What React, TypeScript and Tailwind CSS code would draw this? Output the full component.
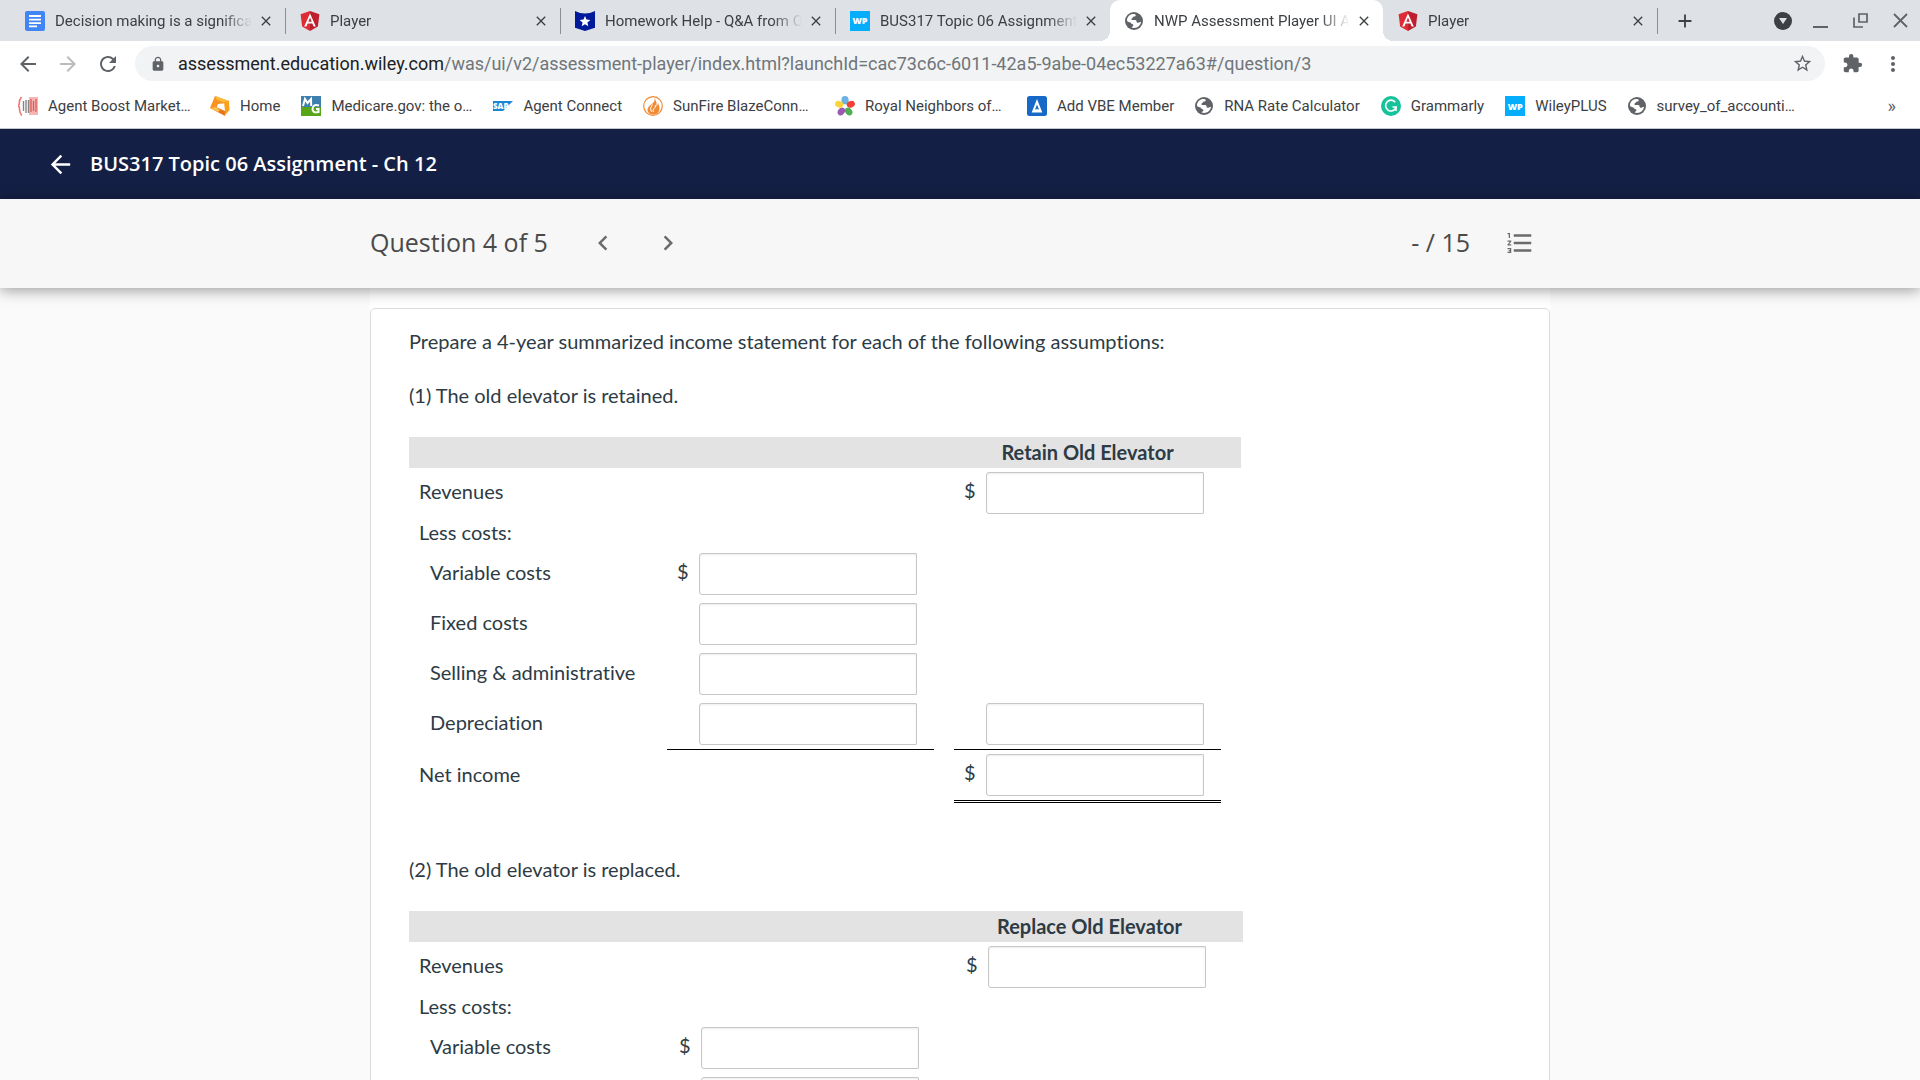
import type { ReactNode } from "react";
import {
  MdAdd,
  MdArrowBack,
  MdArrowForward,
  MdChevronLeft,
  MdChevronRight,
  MdClose,
  MdExtension,
  MdFormatListNumbered,
  MdLock,
  MdMoreVert,
  MdRefresh,
  MdStarBorder,
} from "react-icons/md";

/* ---------- site icons ---------- */

function DocsIcon() {
  return (
    <svg viewBox="0 0 20 20" className="size-5 shrink-0" aria-hidden="true">
      <rect width="20" height="20" rx="2" fill="#4285f4" />
      <path d="M4 5h12M4 8.6h12M4 12.1h12M4 15.4h8" stroke="#fff" strokeWidth="1.8" />
    </svg>
  );
}

function AngularIcon() {
  return (
    <svg viewBox="0 0 20 20" className="size-5 shrink-0" aria-hidden="true">
      <path d="M10 0 .6 3.3l1.5 12.3L10 20z" fill="#dd2c35" />
      <path d="m10 0 9.4 3.3-1.5 12.3L10 20z" fill="#bd1f2d" />
      <path d="m10 2.4-5.8 13h2.2l1.2-2.9h4.8l1.2 2.9h2.2zm0 4.1 1.7 4.2H8.3z" fill="#fff" fillRule="evenodd" />
    </svg>
  );
}

function StarShieldIcon() {
  return (
    <svg viewBox="0 0 20 20" className="size-5 shrink-0" aria-hidden="true">
      <path d="M0 0q10 5 20 0v16.8L10 20 0 16.8z" fill="#001a9b" />
      <path d="m10 5 1.5 3.6 3.9.3-3 2.5.9 3.8-3.3-2-3.3 2 .9-3.8-3-2.5 3.9-.3z" fill="#fff" />
    </svg>
  );
}

function WpIcon() {
  return (
    <span className="flex size-5 shrink-0 items-center justify-center bg-[#05aefc] font-['Open_Sans',sans-serif] text-[9px] leading-none font-extrabold text-white">
      WP
    </span>
  );
}

function GlobeIcon() {
  return (
    <svg viewBox="0 0 18 18" className="mr-px size-[18px] shrink-0" aria-hidden="true">
      <circle cx="9" cy="9" r="9" fill="#5f6368" />
      <path
        d="M1.9 8.3C2.2 5 4.6 2.5 7.600 2c1.500-.2 2.900.1 3.100.9.2.9-.3 1.500-1.600 1.600-1.300.1-1.300 1.700-2.300 2-.9.3-.4 1.300.5 1.400h3c1 0 1.200.9 1.300 1.800.1.900.8 1.200 1.600 1.100 1.100-.1 1.900-.8 2.900-1-.6 3.600-3.400 6.200-7 6.200-.9 0-1.700-.1-2.500-.4.2-.9 1.800-1 1.800-2.300 0-1.100-.9-1.500-2-1.600-.3-1.500-1.500-1.600-2.700-1.800-1-.2-1.800-.7-1.800-1.600z"
        fill="#fff"
      />
    </svg>
  );
}

function AgentBoostIcon() {
  return (
    <svg viewBox="0 0 20 20" className="size-5 shrink-0" aria-hidden="true">
      <path d="M11 1h9v18h-9z" fill="#f6b5b3" />
      <path d="M3.500 1Q1 4 1.300 8L.4 10l1 1.500Q1.200 16 3.700 19.500" fill="none" stroke="#ee7674" strokeWidth="1.600" />
      <path d="M5.500 5v10M8 4v13M10.500 4v13" stroke="#858585" strokeWidth="1.400" />
      <path d="M13 3v13M15.500 5v10M18 3v13" stroke="#df5a58" strokeWidth="1.300" />
    </svg>
  );
}

function HomeTagIcon() {
  return (
    <svg viewBox="0 0 20 20" className="size-5 shrink-0" aria-hidden="true">
      <path d="m5 0 14 5-2 2-9 1-2 5-6-1z" fill="#f7931e" />
      <path d="m5 0 14 5-4 2-8-3z" fill="#fdbb3c" />
      <path d="m0 12 6-1 9 4v5z" fill="#e8741c" />
      <path d="m14 6 5-1 .5 9-5 6 .5-5z" fill="#f9a11b" />
      <path d="m0 12 6-1 4 3-2 2z" fill="#fcc04a" />
    </svg>
  );
}

function MedicareIcon() {
  return (
    <svg viewBox="0 0 20 20" className="size-5 shrink-0" aria-hidden="true">
      <rect width="20" height="11" fill="#3f7fae" />
      <rect y="11" width="20" height="9" fill="#58a618" />
      <path d="m2 10 2-7 2.500 4L10 3l.2 7" fill="none" stroke="#fff" strokeWidth="2" />
      <path d="M18 9.500q-6-2-6.500 3.500 0 4.500 6 3v-3h-2.500" fill="none" stroke="#fff" strokeWidth="2" />
    </svg>
  );
}

function SapIcon() {
  return (
    <span className="flex size-5 shrink-0 items-center" aria-hidden="true">
      <svg viewBox="0 0 20 10" className="h-2.5 w-5">
        <path d="M0 0h20L10 10H0z" fill="#1a86d8" />
        <text x="0" y="8" fontSize="8" fontWeight="800" fontFamily="Open Sans, sans-serif" fill="#fff">
          SAP
        </text>
      </svg>
    </span>
  );
}

function FlameIcon() {
  return (
    <svg viewBox="0 0 20 20" className="size-5 shrink-0" aria-hidden="true">
      <circle cx="10" cy="10" r="9.300" fill="#fff" stroke="#f08a35" strokeWidth="1.200" />
      <path d="M11 1.500q2 3-2 6.500-5 3-4.500 6.500 1 4 5.500 4 6 0 6.500-5.500.2-3-1.500-6-.3 2.500-1.500 3.500Q14 5 11 1.500z" fill="#f08a35" />
      <path d="M9.500 8.500q-3.500 4-1 7.500M12.500 9q.5 2.500-2 4-1 1.500 0 3" fill="none" stroke="#fff" strokeWidth="1" />
    </svg>
  );
}

function FlowerIcon() {
  return (
    <svg viewBox="0 0 20 20" className="size-5 shrink-0" aria-hidden="true">
      <ellipse cx="10" cy="4.200" rx="3.600" ry="4.200" fill="#6cb2e4" />
      <ellipse cx="15.800" cy="8.300" rx="4.200" ry="3.300" transform="rotate(-18 15.800 8.300)" fill="#ef4136" />
      <ellipse cx="13.700" cy="15.500" rx="3.300" ry="4.200" transform="rotate(-36 13.700 15.500)" fill="#4caf50" />
      <ellipse cx="6.300" cy="15.500" rx="3.300" ry="4.200" transform="rotate(36 6.300 15.500)" fill="#9b59b0" />
      <ellipse cx="4.200" cy="8.300" rx="4.200" ry="3.300" transform="rotate(18 4.200 8.300)" fill="#fbd43a" />
      <circle cx="10" cy="10.300" r="1.700" fill="#fff" />
    </svg>
  );
}

function VbeIcon() {
  return (
    <svg viewBox="0 0 20 20" className="size-5 shrink-0" aria-hidden="true">
      <rect width="20" height="20" rx="2.500" fill="#1769c7" />
      <path d="m10 3-5.300 13.500h10.600zm0 5.500 2 5.200L10 13l-2 .7z" fill="#fff" fillRule="evenodd" />
    </svg>
  );
}

function GrammarlyIcon() {
  return (
    <svg viewBox="0 0 20 20" className="size-5 shrink-0" aria-hidden="true">
      <circle cx="10" cy="10" r="10" fill="#15c39a" />
      <path d="M14.200 6.200A5.400 5.400 0 1 0 15.200 11h-3.700" fill="none" stroke="#fff" strokeWidth="1.700" />
      <path d="M15.800 10.500v4.500h-1.600v-3.500z" fill="#fff" />
    </svg>
  );
}

/* ---------- browser chrome ---------- */

type Tab = { title: string; icon: ReactNode; active?: boolean; divider?: boolean };

const tabs: Tab[] = [
  { title: "Decision making is a significant", icon: <DocsIcon />, divider: true },
  { title: "Player", icon: <AngularIcon />, divider: true },
  { title: "Homework Help - Q&A from Online", icon: <StarShieldIcon />, divider: true },
  { title: "BUS317 Topic 06 Assignment", icon: <WpIcon /> },
  { title: "NWP Assessment Player UI App", icon: <GlobeIcon />, active: true },
  { title: "Player", icon: <AngularIcon />, divider: true },
];

function TabStrip() {
  return (
    <div className="flex h-[41px] shrink-0 items-stretch bg-[#dee1e6] pl-2.5">
      <div role="tablist" className="flex min-w-0 items-stretch">
        {tabs.map((tab, i) => (
          <div
            key={i}
            role="tab"
            aria-selected={!!tab.active}
            className={
              tab.active
                ? "relative flex w-[273px] min-w-0 items-center rounded-t-[10px] bg-white pr-[11px] pl-[15px] before:absolute before:bottom-0 before:-left-2.5 before:size-2.5 before:bg-[radial-gradient(circle_at_0_0,transparent_10px,white_10px)] after:absolute after:-right-2.5 after:bottom-0 after:size-2.5 after:bg-[radial-gradient(circle_at_100%_0,transparent_10px,white_10px)]"
                : "relative flex w-[275px] min-w-0 items-center pr-[11px] pl-[15px] last:w-[274px]"
            }
          >
            {tab.icon}
            <span className="ml-2.5 flex-1 overflow-hidden [mask-image:linear-gradient(to_right,black_calc(100%-30px),transparent)] text-[15px] leading-5 whitespace-nowrap">
              {tab.title}
            </span>
            <button type="button" aria-label={"Close " + tab.title} className="ml-1.5 shrink-0 text-[#3c4043]">
              <MdClose className="size-4" />
            </button>
            {tab.divider && <span className="absolute top-2 -right-px h-[26px] w-px bg-[#8a8d91]" />}
          </div>
        ))}
      </div>
      <button type="button" aria-label="New tab" className="ml-[17px] text-[#3c4043]">
        <MdAdd className="size-[22px]" />
      </button>
      <div className="ml-auto flex items-center pr-3 text-[#5f6368]">
        <button type="button" aria-label="Search tabs" className="mr-[21px]">
          <svg viewBox="0 0 18 18" className="size-[18px]">
            <circle cx="9" cy="9" r="9" fill="#3c4043" />
            <path d="M5 6h8l-4 6z" fill="#dee1e6" />
          </svg>
        </button>
        <button type="button" aria-label="Minimize" className="mr-[25px]">
          <svg viewBox="0 0 15 16" className="h-4 w-[15px]">
            <path d="M0 14h15" stroke="currentColor" strokeWidth="2" />
          </svg>
        </button>
        <button type="button" aria-label="Restore" className="mr-[25px]">
          <svg viewBox="0 0 15 15" className="size-[15px]" fill="none" stroke="currentColor" strokeWidth="1.700">
            <path d="M6 1h8v8H6zM1 4.500V14h9" />
          </svg>
        </button>
        <button type="button" aria-label="Close window">
          <svg viewBox="0 0 15 15" className="size-[15px]" stroke="currentColor" strokeWidth="1.800">
            <path d="m1 1 13 13M14 1 1 14" />
          </svg>
        </button>
      </div>
    </div>
  );
}

function Toolbar() {
  return (
    <div className="flex h-[45px] shrink-0 items-center pr-[15px] pl-4 text-[#5f6368]">
      <button type="button" aria-label="Back" className="mr-4">
        <MdArrowBack className="size-6" />
      </button>
      <button type="button" aria-label="Forward" className="mr-4 text-[#babcbe]">
        <MdArrowForward className="size-6" />
      </button>
      <button type="button" aria-label="Reload">
        <MdRefresh className="size-6" />
      </button>
      <div className="ml-[15px] flex h-[35px] min-w-0 flex-1 items-center rounded-full bg-[#f1f3f4] pr-3 pl-[15px]">
        <MdLock className="size-4 shrink-0" />
        <div
          role="textbox"
          aria-label="Address"
          tabIndex={0}
          className="ml-3 min-w-0 flex-1 overflow-hidden text-lg leading-6 whitespace-nowrap"
        >
          <span className="text-[#202124]">assessment.education.wiley.com</span>
          <span className="text-[#70757a]">
            /was/ui/v2/assessment-player/index.html?launchId=cac73c6c-6011-42a5-9abe-04ec53227a63#/question/3
          </span>
        </div>
        <button type="button" aria-label="Bookmark this page">
          <MdStarBorder className="size-[21px]" />
        </button>
      </div>
      <button type="button" aria-label="Extensions" className="ml-[17px]">
        <MdExtension className="size-[21px]" />
      </button>
      <button type="button" aria-label="Menu" className="ml-[18px]">
        <MdMoreVert className="size-6" />
      </button>
    </div>
  );
}

const bookmarks: { label: string; icon: ReactNode; cut?: boolean }[] = [
  { label: "Agent Boost Market…", icon: <AgentBoostIcon />, cut: true },
  { label: "Home", icon: <HomeTagIcon /> },
  { label: "Medicare.gov: the o…", icon: <MedicareIcon />, cut: true },
  { label: "Agent Connect", icon: <SapIcon /> },
  { label: "SunFire BlazeConn…", icon: <FlameIcon />, cut: true },
  { label: "Royal Neighbors of…", icon: <FlowerIcon />, cut: true },
  { label: "Add VBE Member", icon: <VbeIcon /> },
  { label: "RNA Rate Calculator", icon: <GlobeIcon /> },
  { label: "Grammarly", icon: <GrammarlyIcon /> },
  { label: "WileyPLUS", icon: <WpIcon /> },
  { label: "survey_of_accounti…", icon: <GlobeIcon />, cut: true },
];

function BookmarksBar() {
  return (
    <nav
      aria-label="Bookmarks"
      className="flex h-[43px] shrink-0 items-center gap-[21px] border-b border-[#c4c7cc] pr-6 pb-0.5 pl-[18px] text-[15px] leading-5"
    >
      {bookmarks.map((b) => (
        <a key={b.label} href="#" className="flex items-center gap-2.5 whitespace-nowrap">
          {b.icon}
          <span className={b.cut ? "w-[141px]" : ""}>{b.label}</span>
        </a>
      ))}
      <button type="button" aria-label="More bookmarks" className="ml-auto text-lg leading-5 text-[#5f6368]">
        »
      </button>
    </nav>
  );
}

/* ---------- assessment ---------- */

function AssignmentHeader() {
  return (
    <header className="flex h-[70px] shrink-0 items-center gap-[15px] bg-[#141f45] pl-[46px] font-['Open_Sans',sans-serif] text-white">
      <a href="#" aria-label="Back to assignments">
        <MdArrowBack className="size-[29px]" />
      </a>
      <h1 className="text-xl leading-7 font-semibold">BUS317 Topic 06 Assignment - Ch 12</h1>
    </header>
  );
}

function QuestionBar() {
  return (
    <div className="relative z-10 shrink-0 bg-[#f7f7f7] font-['Open_Sans',sans-serif] text-[#4a4a4a] shadow-[0_2px_14px_rgba(0,0,0,0.4)]">
      <div className="mx-auto flex h-[89px] max-w-[1180px] items-center pr-[15px] pb-0.5">
        <h2 className="pb-0.5 text-[25px] leading-8">Question 4 of 5</h2>
        <button type="button" aria-label="Previous question" className="ml-10 text-[#6b6b6b]">
          <MdChevronLeft className="size-[30px]" />
        </button>
        <button type="button" aria-label="Next question" className="ml-[35px] text-[#6b6b6b]">
          <MdChevronRight className="size-[30px]" />
        </button>
        <span className="ml-auto pb-0.5 text-[25px] leading-8">- / 15</span>
        <button type="button" aria-label="Question list" className="ml-[35px] text-[#6b6b6b]">
          <MdFormatListNumbered className="size-[30px]" />
        </button>
      </div>
    </div>
  );
}

function Amount({ label, dollar }: { label: string; dollar?: boolean }) {
  return (
    <div className="flex h-[50px] items-center pr-[17px] pl-2.5">
      <span className="w-[22px] shrink-0 pb-1.5">{dollar ? "$" : ""}</span>
      <input
        type="text"
        aria-label={label}
        className="h-[42px] min-w-0 flex-1 rounded-l-[3px] rounded-r-[1px] border border-[#c7c7c7] bg-white px-2 shadow-[inset_0_1px_2px_rgba(0,0,0,0.08)] outline-none"
      />
    </div>
  );
}

type Row = { label: string; indent?: boolean; first?: "plain" | "dollar"; second?: "plain" | "dollar"; rule?: "single" | "double" };

const rows: Row[] = [
  { label: "Revenues", second: "dollar" },
  { label: "Less costs:" },
  { label: "Variable costs", indent: true, first: "dollar" },
  { label: "Fixed costs", indent: true, first: "plain" },
  { label: "Selling & administrative", indent: true, first: "plain" },
  { label: "Depreciation", indent: true, first: "plain", second: "plain", rule: "single" },
  { label: "Net income", second: "dollar", rule: "double" },
];

function IncomeTable({ heading, wide }: { heading: string; wide?: boolean }) {
  return (
    <table className={wide ? "w-[834px] table-fixed border-separate border-spacing-0" : "w-[832px] table-fixed border-separate border-spacing-0"}>
      <colgroup>
        <col />
        <col className="w-[267px]" />
        <col className="w-5" />
        <col className="w-[267px]" />
        <col className="w-5" />
      </colgroup>
      <thead>
        <tr className="h-[31px] bg-[#e3e3e3]">
          <td />
          <td />
          <td />
          <th scope="col" className="px-0 pt-0 pb-0.5 text-center leading-7 font-bold">
            {heading}
          </th>
          <td />
        </tr>
      </thead>
      <tbody>
        {rows.map((row) => (
          <tr key={row.label} className="h-[31px]">
            <th
              scope="row"
              className={
                (row.indent ? "pt-0 pr-0 pl-[21px] text-left leading-[26px] font-normal " : "pt-0 pr-0 pl-2.5 text-left leading-[26px] font-normal ") +
                (row.rule ? "pb-1.5" : "pb-1")
              }
            >
              {row.label}
            </th>
            <td className={row.rule === "single" ? "border-b border-black p-0" : "p-0"}>
              {row.first && <Amount label={heading + ", " + row.label} dollar={row.first === "dollar"} />}
            </td>
            <td className="p-0" />
            <td className={row.rule === "single" ? "border-b border-black p-0" : "p-0"}>
              {row.second && (
                <Amount label={heading + ", " + row.label + (row.first ? " total" : "")} dollar={row.second === "dollar"} />
              )}
              {row.rule === "double" && <div className="h-[3px] border-y border-black" />}
            </td>
            <td className="p-0" />
          </tr>
        ))}
      </tbody>
    </table>
  );
}

export default function App() {
  return (
    <div className="flex h-screen flex-col overflow-hidden bg-white font-[Roboto,sans-serif] text-[#3c4043]">
      <TabStrip />
      <Toolbar />
      <BookmarksBar />
      <AssignmentHeader />
      <QuestionBar />
      <main className="min-h-0 flex-1 overflow-hidden bg-[#fafafa]">
        <div className="mx-auto max-w-[1180px] bg-white pt-5">
          <section className="rounded-[5px] border border-[#dcdcdc] bg-white px-[38px] pt-[17px] pb-10 font-[Lato,sans-serif] text-xl leading-[30px] text-[#2d3b45] [font-variant-ligatures:none]">
            <p>Prepare a 4-year summarized income statement for each of the following assumptions:</p>
            <p className="mt-6 mb-[27px]">(1) The old elevator is retained.</p>
            <IncomeTable heading="Retain Old Elevator" />
            <p className="mt-[51px] mb-[27px]">(2) The old elevator is replaced.</p>
            <IncomeTable heading="Replace Old Elevator" wide />
          </section>
        </div>
      </main>
    </div>
  );
}
